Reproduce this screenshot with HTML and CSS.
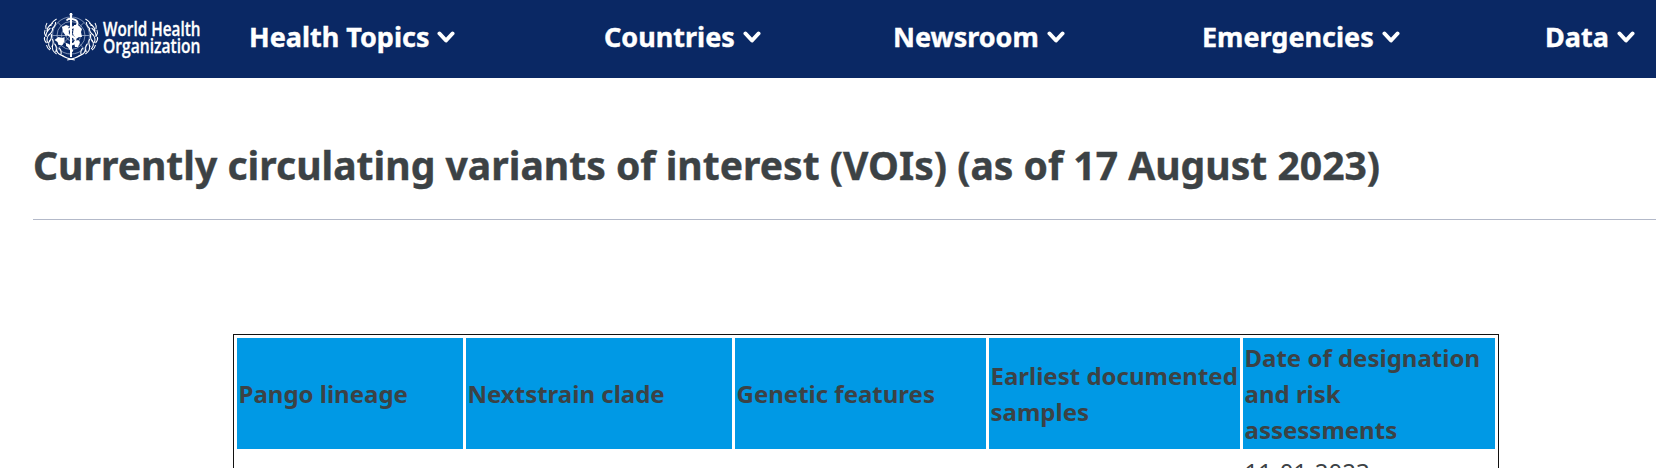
FILE: index.html
```
<!DOCTYPE html>
<html lang="en">
<head>
<meta charset="utf-8">
<title>Variants of interest</title>
<link rel="stylesheet" href="styles.css">
</head>
<body>
<header class="header">
  <svg class="logo" width="160" height="54" viewBox="42 10 160 54">
    <g fill="none" stroke="#aebbd6" stroke-width="0.7">
      <circle cx="71" cy="35.500" r="18.5"/><circle cx="71" cy="35.500" r="14"/><circle cx="71" cy="35.500" r="9.500"/><circle cx="71" cy="35.500" r="5"/>
      <path d="M52.500 35.500h37M58 22.500l26 26M84 22.500l-26 26"/>
    </g>
    <g fill="#fff">
      <path d="M54.500 40l4-3 4 1 2-1v4l-2 4-4 0-1-3zM62 27l4-2 3 1-1 3 1 4-3 3-3-4zM74 25l4 0 4 4-1 3 1 5-3 0-3 2-3-5zM74 42l4-2 2 2-2 5-3 0zM66 43l3 1v4l-3-2z"/>
    </g>
    <g transform="translate(2.84 0) scale(.96 1)">
      <g id="wreath" class="leaf">
        <path d="M56 19q-5.500 3-6 7M52 23q-6 4-6 8M49.500 28q-5 4-4.500 9M48.500 34q-4 5-1.500 9M49 40q-3 5 1 9M52 45q-2 5 4 9M56 49q0 5 7 7M55 22q0 4-4 7M52 28q0 4-4 7M50.500 34q1 4-2 8M51.500 39q2 4-.500 8M54 44q3 3 1 8M58.500 48q3 2 2 7M45 29q-1-3 1-6M44.500 36q-2-3-.500-6M45.500 43q-3-3-2-6M49 50q-3-2-3.500-5"/>
        <path d="M61 55q5 3.500 14 5"/>
      </g>
      <use href="#wreath" transform="translate(142 0) scale(-1 1)"/>
    </g>
    <path d="M71 13v44" stroke="#fff" stroke-width="2"/>
    <circle cx="71" cy="14.500" r="1.500" fill="#fff"/>
    <path d="M66.500 20.500q2-2.500 6-1.500 5 1 5 4 0 3.500-6 5-5 1.500-4.500 4.500.500 3 5 4 4 1.500 3.500 4.500-.500 2.500-4 3.500-3 1.500-2 3.500 1 2 3.500 3" fill="none" stroke="#fff" stroke-width="1.900"/>
    <g class="logo-text"><text x="103" y="36" textLength="97.500" lengthAdjust="spacingAndGlyphs">World Health</text>
    <text x="103" y="53" textLength="97.500" lengthAdjust="spacingAndGlyphs">Organization</text></g>
  </svg>
  <nav class="nav">
    <a class="item topics">Health Topics<svg class="chev" viewBox="0 0 18 13"><path d="M2.500 2.500L9 9.500l6.500-7"/></svg></a>
    <a class="item countries">Countries<svg class="chev" viewBox="0 0 18 13"><path d="M2.500 2.500L9 9.500l6.500-7"/></svg></a>
    <a class="item newsroom">Newsroom<svg class="chev" viewBox="0 0 18 13"><path d="M2.500 2.500L9 9.500l6.500-7"/></svg></a>
    <a class="item emergencies">Emergencies<svg class="chev" viewBox="0 0 18 13"><path d="M2.500 2.500L9 9.500l6.500-7"/></svg></a>
    <a class="item data">Data<svg class="chev" viewBox="0 0 18 13"><path d="M2.500 2.500L9 9.500l6.500-7"/></svg></a>
  </nav>
</header>
<main class="main">
  <h1 class="title">Currently circulating variants of interest (VOIs) (as of 17 August 2023)</h1>
  <table class="variants">
    <colgroup><col class="c1"><col class="c2"><col class="c3"><col class="c4"><col class="c5"></colgroup>
    <tr><th>Pango lineage</th><th>Nextstrain clade</th><th>Genetic features</th><th>Earliest documented samples</th><th>Date of designation and risk assessments</th></tr>
    <tr><td></td><td></td><td></td><td></td><td>11-01-2023</td></tr>
  </table>
</main>
</body>
</html>
```
FILE: styles.css
```
body { margin: 0; height: 468px; overflow: hidden; background: #fff; color: #3c4245; font-family: "Noto Sans", sans-serif; }
.header { display: flex; height: 78px; background: #0a2864; color: #fff; }
.logo { margin: 10px 0 0 42px; flex: none; overflow: visible; }
.logo-text { font: 600 19px "Open Sans", sans-serif; fill: #fff; stroke: #fff; stroke-width: 0.3; }
.leaf { fill: none; stroke: #fff; stroke-width: 1.1; }
.nav { display: flex; height: 73px; align-items: center; margin-left: 47px; }
.item { display: flex; align-items: center; flex: none; font-size: 27px; font-weight: 700; white-space: nowrap; -webkit-text-stroke: 0.4px #fff; }
.chev { width: 18px; height: 13px; margin: 2px 0 0 8px; fill: none; stroke: #fff; stroke-width: 4; stroke-linecap: round; stroke-linejoin: round; }
.topics { width: 355px; }
.countries { width: 289px; }
.newsroom { width: 309px; }
.emergencies { width: 343px; }
.main { padding-left: 33px; }
.title { margin: 0; padding: 59px 0 26px; font-size: 39.1px; line-height: 56px; font-weight: 700; white-space: nowrap; border-bottom: 1px solid #b3b9c9; -webkit-text-stroke: 0.4px #3c4245; }
.variants { table-layout: fixed; width: 1266px; margin: 114px 0 0 200px; border: 1px solid #111; border-spacing: 3px; font-size: 24px; line-height: 36px; }
.variants th, .variants td { padding: 1.5px; text-align: left; }
.variants th { background: #0099e5; font-weight: 700; }
.c1 { width: 226px; }
.c2 { width: 266px; }
.c3 { width: 251px; }
.c4 { width: 251px; }
.c5 { width: 252px; }
```
